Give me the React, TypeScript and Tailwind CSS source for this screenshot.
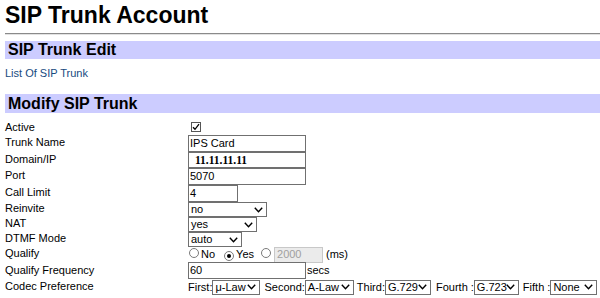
import React from "react";

function Chevron() {
  return (
    <svg width="9" height="6" viewBox="0 0 9 6" className="absolute right-[3px] top-1/2 -translate-y-1/2">
      <path d="M0.8 0.8L4.5 4.8L8.2 0.8" fill="none" stroke="#000" strokeWidth="1.4" />
    </svg>
  );
}

function Sel({ text, className }: { text: string; className: string }) {
  return (
    <div className={"relative shrink-0 flex items-center bg-white border border-[#707070] pl-[2px] text-[11px] leading-[13px] text-black whitespace-nowrap " + className}>
      <span>{text}</span>
      <Chevron />
    </div>
  );
}

function Radio({ checked }: { checked?: boolean }) {
  return (
    <span className="relative inline-flex items-center justify-center w-[10px] h-[10px] rounded-full border border-[#7a7a7a] bg-white shrink-0">
      {checked && <span className="w-[4px] h-[4px] rounded-full bg-black" />}
    </span>
  );
}

function Row({ label, h, up, children }: { label: string; h: string; up?: boolean; children: React.ReactNode }) {
  return (
    <div className={"flex items-center " + h}>
      <div className={"w-[183px] shrink-0 whitespace-nowrap " + (up ? "pb-[2px]" : "")}>{label}</div>
      <div className="flex items-center whitespace-nowrap">{children}</div>
    </div>
  );
}

const inputCls = "shrink-0 flex items-center bg-white border border-[#707070] pl-[1px] text-[11px] leading-[13px] text-black";

export default function App() {
  return (
    <div className="w-[600px] h-[298px] overflow-hidden bg-white pl-[5px] text-black font-['Liberation_Sans',Arial,sans-serif]">
      <h1 className="pt-[2px] text-[23px] font-bold leading-[26px]">SIP Trunk Account</h1>
      <div className="mt-[5px] border-t border-t-[#8a8a8a] border-b border-b-[#e2e2e2]" />
      <div className="mt-[6px] h-[18px] bg-[#ccccff] pl-[3px] text-[16px] font-bold leading-[18px]">SIP Trunk Edit</div>
      <div className="mt-[8px] text-[11px] leading-[13px] text-[#174a80]">List Of SIP Trunk</div>
      <div className="mt-[14px] h-[19px] bg-[#ccccff] pl-[3px] text-[16px] font-bold leading-[19px]">Modify SIP Trunk</div>

      <div className="mt-[6px] flex flex-col text-[11px] leading-[13px]">
        <Row label="Active" h="h-[16px]">
          <span className="ml-[3px] w-[10px] h-[10px] border border-[#555] bg-white flex items-center justify-center">
            <svg width="8" height="8" viewBox="0 0 8 8">
              <path d="M1 4.2L3 6.3L7 1.2" fill="none" stroke="#000" strokeWidth="1.3" />
            </svg>
          </span>
        </Row>
        <Row label="Trunk Name" h="h-[17px]" up>
          <div className={inputCls + " w-[118px] h-[17px]"}>IPS Card</div>
        </Row>
        <Row label="Domain/IP" h="h-[16px]" up>
          <div className={inputCls + " w-[118px] h-[16px]"}>
            <span className="pl-[5px] font-['Liberation_Serif',serif] font-bold text-[11.5px]">11.11.11.11</span>
          </div>
        </Row>
        <Row label="Port" h="h-[17px]" up>
          <div className={inputCls + " w-[118px] h-[17px]"}>5070</div>
        </Row>
        <Row label="Call Limit" h="h-[17px]" up>
          <div className={inputCls + " w-[50px] h-[17px]"}>4</div>
        </Row>
        <Row label="Reinvite" h="h-[15px]" up>
          <Sel text="no" className="w-[79px] h-[15px]" />
        </Row>
        <Row label="NAT" h="h-[15px]" up>
          <Sel text="yes" className="w-[69px] h-[15px]" />
        </Row>
        <Row label="DTMF Mode" h="h-[15px]" up>
          <Sel text="auto" className="w-[54px] h-[15px]" />
        </Row>
        <Row label="Qualify" h="h-[15px]" up>
          <span className="ml-[1px]"><Radio /></span>
          <span className="ml-[2px]">No</span>
          <span className="ml-[9px]"><Radio checked /></span>
          <span className="ml-[2px]">Yes</span>
          <span className="ml-[7px]"><Radio /></span>
          <div className="ml-[3px] w-[49px] h-[16px] flex items-center bg-[#ebebeb] border border-[#c8c8c8] pl-[2px] text-[#a0a0a0]">2000</div>
          <span className="ml-[3px]">(ms)</span>
        </Row>
        <Row label="Qualify Frequency" h="h-[17px]">
          <div className={inputCls + " w-[118px] h-[17px]"}>60</div>
          <span className="ml-[1px]">secs</span>
        </Row>
        <Row label="Codec Preference" h="h-[16px]" up>
          <span>First:</span>
          <Sel text="μ-Law" className="w-[48px] h-[15px]" />
          <span className="ml-[4px]">Second:</span>
          <Sel text="A-Law" className="w-[49px] h-[15px]" />
          <span className="ml-[3px]">Third:</span>
          <Sel text="G.729" className="w-[46px] h-[15px]" />
          <span className="ml-[5px]">Fourth :</span>
          <Sel text="G.723" className="w-[45px] h-[15px]" />
          <span className="ml-[4px]">Fifth :</span>
          <Sel text="None" className="w-[47px] h-[15px]" />
        </Row>
      </div>
    </div>
  );
}
